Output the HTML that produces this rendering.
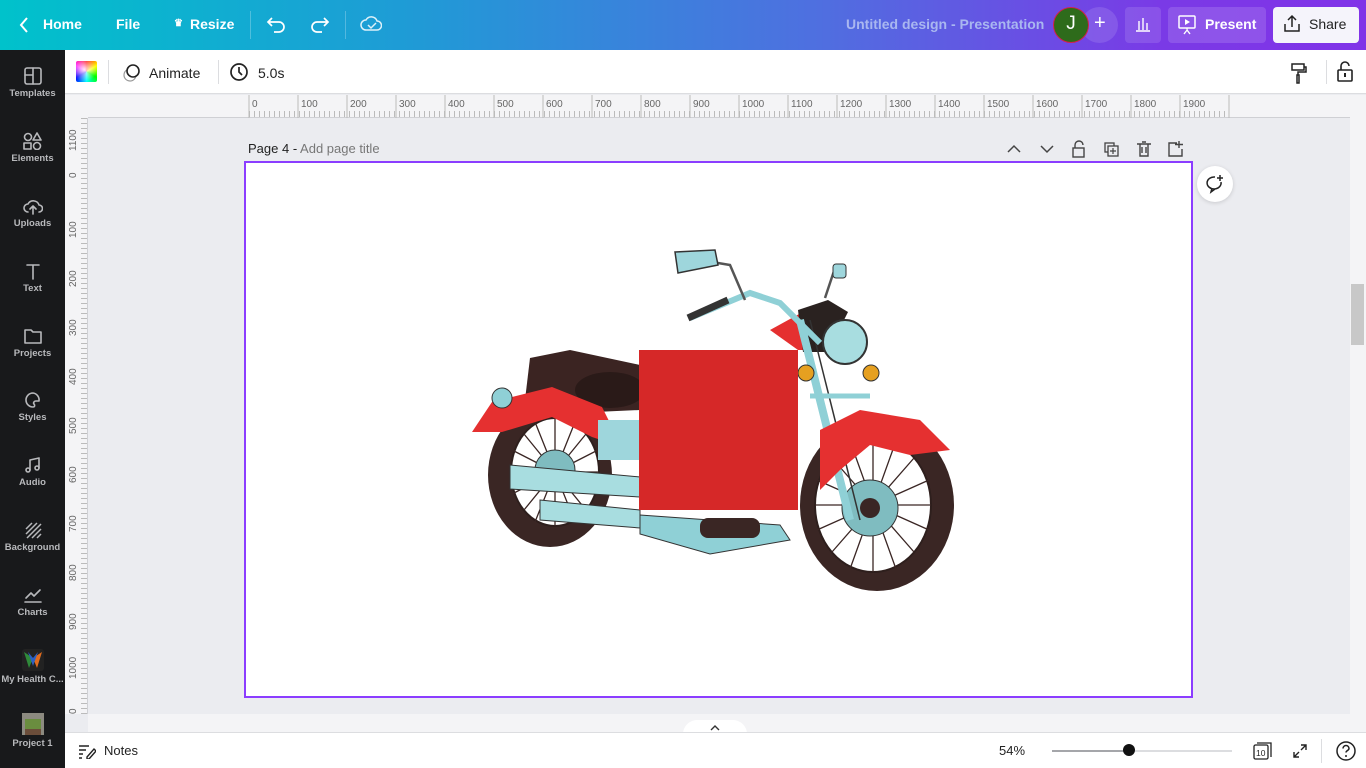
<!DOCTYPE html>
<html><head><meta charset="utf-8"><style>
*{margin:0;padding:0;box-sizing:border-box}
body{width:1366px;height:768px;overflow:hidden;font-family:"Liberation Sans",sans-serif;background:#ebecf0;position:relative}
.a{position:absolute}
.top{left:0;top:0;width:1366px;height:50px;background:linear-gradient(90deg,#00c2cb 0%,#1f9bd6 30%,#4f6fe0 60%,#7a3ae6 85%,#8133e8 100%);color:#fff}
.top .t{position:absolute;top:16px;font-size:14px;font-weight:bold}
.side{left:0;top:50px;width:65px;height:718px;background:#18191b}
.side .it{position:absolute;left:0;width:65px;text-align:center;color:#b8b9bc;font-size:9.5px;font-weight:bold}
.side svg{display:block;margin:0 auto 3px}
.tb{left:65px;top:50px;width:1301px;height:44px;background:#fff;border-bottom:1px solid #dcdde0}
.rt{left:88px;top:95px;width:1262px;height:23px;background:#f4f4f6;border-bottom:1px solid #cfd0d4}
.rl{left:65px;top:118px;width:23px;height:596px;background:#f4f4f6;border-right:1px solid #cfd0d4}
.bot{left:65px;top:732px;width:1301px;height:36px;background:#fff;border-top:1px solid #dcdde0}
.ic{stroke:#222;fill:none;stroke-width:1.6;stroke-linecap:round;stroke-linejoin:round}
</style></head><body>
<div class="a top">
 <svg class="a" style="left:18px;top:16px" width="12" height="18"><path d="M9 2L3 9l6 7" stroke="#fff" stroke-width="2" fill="none"/></svg>
 <span class="t" style="left:43px">Home</span>
 <span class="t" style="left:116px">File</span>
 <span class="t" style="left:174px;font-size:10px;top:18px">♛</span>
 <span class="t" style="left:190px">Resize</span>
 <div class="a" style="left:250px;top:11px;width:1px;height:28px;background:rgba(255,255,255,.25)"></div>
 <svg class="a" style="left:266px;top:14px" width="22" height="20"><path d="M6 4L2 8l4 4M2 8h11a5 5 0 010 10H8" stroke="#fff" stroke-width="1.7" fill="none"/></svg>
 <svg class="a" style="left:308px;top:14px" width="22" height="20"><path d="M16 4l4 4-4 4M20 8H9a5 5 0 000 10h5" stroke="#fff" stroke-width="1.7" fill="none"/></svg>
 <div class="a" style="left:345px;top:11px;width:1px;height:28px;background:rgba(255,255,255,.25)"></div>
 <svg class="a" style="left:360px;top:14px" width="22" height="20"><path d="M6 16a5 5 0 010-10 6 6 0 0111 1 4 4 0 010 9z M8 11l3 3 5-5" stroke="#fff" stroke-width="1.5" fill="none" opacity=".85"/></svg>
 <span class="t" style="left:846px;font-weight:bold;color:#a9b7f0;font-size:14px">Untitled design - Presentation</span>
 <div class="a" style="left:1081px;top:7px;width:37px;height:36px;border-radius:50%;background:rgba(255,255,255,.12)"></div>
 <span class="t" style="left:1094px;top:12px;font-size:20px;font-weight:normal">+</span>
 <div class="a" style="left:1053px;top:7px;width:36px;height:36px;border-radius:50%;background:#2e6b1b;border:1.5px solid #d3204a;color:#fff;font-size:19px;text-align:center;line-height:32px">J</div>
 <div class="a" style="left:1125px;top:7px;width:36px;height:36px;border-radius:4px;background:rgba(255,255,255,.12)"></div>
 <svg class="a" style="left:1134px;top:15px" width="18" height="18"><path d="M2 16h14M5 15V6M9 15V3M13 15V8" stroke="#fff" stroke-width="1.4"/></svg>
 <div class="a" style="left:1168px;top:7px;width:98px;height:36px;border-radius:4px;background:rgba(255,255,255,.14)"></div>
 <svg class="a" style="left:1177px;top:14px" width="20" height="22"><rect x="2" y="2" width="16" height="12" rx="1" stroke="#fff" stroke-width="1.5" fill="none"/><path d="M8 5l5 3-5 3z" fill="#fff"/><path d="M10 14v2l-3 4M10 16l3 4" stroke="#fff" stroke-width="1.4"/></svg>
 <span class="t" style="left:1205px">Present</span>
 <div class="a" style="left:1273px;top:7px;width:86px;height:36px;border-radius:4px;background:#f5f4fb"></div>
 <svg class="a" style="left:1282px;top:14px" width="20" height="20"><path d="M3 10v7h14v-7M10 13V2M6 6l4-4 4 4" stroke="#222" stroke-width="1.5" fill="none"/></svg>
 <span class="t" style="left:1309px;color:#222;font-weight:normal">Share</span>
</div>

<div class="a side">
 <div class="it" style="top:17px"><svg width="18" height="18"><rect x="1" y="1" width="16" height="16" rx="2" class="ic" style="stroke:#b8b9bc"/><path d="M9 1v16M1 8h8" class="ic" style="stroke:#b8b9bc"/></svg>Templates</div>
 <div class="it" style="top:82px"><svg width="20" height="18"><circle cx="5" cy="5" r="3.5" class="ic" style="stroke:#b8b9bc"/><path d="M14 1l4 7h-8z" class="ic" style="stroke:#b8b9bc"/><rect x="1" y="11" width="7" height="6" class="ic" style="stroke:#b8b9bc"/><circle cx="14" cy="14" r="3.5" class="ic" style="stroke:#b8b9bc"/></svg>Elements</div>
 <div class="it" style="top:147px"><svg width="20" height="18"><path d="M5 15a4 4 0 010-8 6 6 0 0111 1 3.5 3.5 0 010 7M10 17V9M7 12l3-3 3 3" class="ic" style="stroke:#b8b9bc"/></svg>Uploads</div>
 <div class="it" style="top:212px"><svg width="18" height="18"><path d="M3 3h12M9 3v14" class="ic" style="stroke:#b8b9bc"/></svg>Text</div>
 <div class="it" style="top:277px"><svg width="20" height="18"><path d="M2 3h6l2 2h8v11H2z" class="ic" style="stroke:#b8b9bc"/></svg>Projects</div>
 <div class="it" style="top:341px"><svg width="18" height="18"><path d="M9 2a7 7 0 000 14c2 0 2-2 1-3s0-3 2-3h3a7 7 0 00-6-8z" class="ic" style="stroke:#b8b9bc"/></svg>Styles</div>
 <div class="it" style="top:406px"><svg width="18" height="18"><path d="M6 14V4l9-2v10" class="ic" style="stroke:#b8b9bc"/><circle cx="4" cy="14" r="2" class="ic" style="stroke:#b8b9bc"/><circle cx="13" cy="12" r="2" class="ic" style="stroke:#b8b9bc"/></svg>Audio</div>
 <div class="it" style="top:471px"><svg width="18" height="18"><path d="M2 8l6-6M2 13L13 2M3 17L17 3M8 17l9-9M13 17l4-4" stroke="#b8b9bc" stroke-width="1.5"/></svg>Background</div>
 <div class="it" style="top:536px"><svg width="20" height="18"><path d="M3 12l5-5 3 3 6-6M2 16h16" class="ic" style="stroke:#b8b9bc"/></svg>Charts</div>
 <div class="it" style="top:599px"><svg width="22" height="22"><rect width="22" height="22" rx="3" fill="#222"/><path d="M2 3l5 16 4-10z" fill="#2f8a3a"/><path d="M20 3l-5 16-4-10z" fill="#e06b1e"/><path d="M6 3l5 14 5-14-5 6z" fill="#2b5fc4"/></svg>My Health C...</div>
 <div class="it" style="top:663px"><svg width="22" height="22"><rect width="22" height="22" fill="#8c8a80"/><rect x="3" y="6" width="16" height="10" fill="#6a8d3f"/><rect x="3" y="16" width="16" height="6" fill="#6b4d3a"/></svg>Project 1</div>
</div>

<div class="a tb">
 <div class="a" style="left:11px;top:11px;width:21px;height:21px;border-radius:2px;background:conic-gradient(red,yellow,lime,cyan,blue,magenta,red)"><div style="width:100%;height:100%;background:radial-gradient(circle at 40% 40%,rgba(255,255,255,.9),rgba(255,255,255,0) 70%)"></div></div>
 <div class="a" style="left:43px;top:10px;width:1px;height:24px;background:#dcdde0"></div>
 <svg class="a" style="left:56px;top:12px" width="22" height="22"><circle cx="9" cy="13" r="6" stroke="#999" stroke-width="1.2" fill="none"/><circle cx="12" cy="9" r="6" stroke="#222" stroke-width="1.6" fill="#fff"/></svg>
 <span class="a" style="left:84px;top:15px;font-size:14px;color:#222">Animate</span>
 <div class="a" style="left:153px;top:10px;width:1px;height:24px;background:#dcdde0"></div>
 <svg class="a" style="left:164px;top:12px" width="20" height="20"><circle cx="10" cy="10" r="8" stroke="#222" stroke-width="1.7" fill="none"/><path d="M10 5v5l3 3" stroke="#222" stroke-width="1.7" fill="none"/></svg>
 <span class="a" style="left:193px;top:15px;font-size:14px;color:#222">5.0s</span>
 <svg class="a" style="left:1224px;top:11px" width="20" height="24"><path d="M3 3h12v6H3zM15 6h2v5H9v3M8 14h2v8H8z" stroke="#222" stroke-width="1.5" fill="none"/></svg>
 <div class="a" style="left:1261px;top:10px;width:1px;height:24px;background:#dcdde0"></div>
 <svg class="a" style="left:1271px;top:10px" width="18" height="24"><path d="M5 10V6a4 4 0 018 0" stroke="#222" stroke-width="1.6" fill="none"/><rect x="2" y="10" width="14" height="11" rx="1" stroke="#222" stroke-width="1.6" fill="none"/><path d="M9 13v4" stroke="#222" stroke-width="2"/></svg>
</div>

<div class="a" style="left:65px;top:95px;width:23px;height:23px;background:#f4f4f6"></div>
<div class="a rt">
 <svg width="1262" height="23" style="position:absolute;left:0;top:0">
  <g font-size="10" fill="#666" font-family="Liberation Sans">
   <text x="164" y="12">0</text><text x="213" y="12">100</text><text x="262" y="12">200</text><text x="311" y="12">300</text><text x="360" y="12">400</text><text x="409" y="12">500</text><text x="458" y="12">600</text><text x="507" y="12">700</text><text x="556" y="12">800</text><text x="605" y="12">900</text><text x="654" y="12">1000</text><text x="703" y="12">1100</text><text x="752" y="12">1200</text><text x="801" y="12">1300</text><text x="850" y="12">1400</text><text x="899" y="12">1500</text><text x="948" y="12">1600</text><text x="997" y="12">1700</text><text x="1046" y="12">1800</text><text x="1095" y="12">1900</text>
  </g>
  <path stroke="#bbb" d="M161 23v-23M210 23v-23M259 23v-23M308 23v-23M357 23v-23M406 23v-23M455 23v-23M504 23v-23M553 23v-23M602 23v-23M651 23v-23M700 23v-23M749 23v-23M798 23v-23M847 23v-23M896 23v-23M945 23v-23M994 23v-23M1043 23v-23M1092 23v-23M1141 23v-23"/>
  <line x1="161" y1="19" x2="1141" y2="19" stroke="#bbb" stroke-dasharray="1 4" stroke-width="6"/>
 </svg>
</div>
<div class="a rl">
 <svg width="23" height="596" style="position:absolute;left:0;top:0">
  <g font-size="10" fill="#666" font-family="Liberation Sans">
   <text transform="translate(11,33) rotate(-90)">1100</text><text transform="translate(11,60) rotate(-90)">0</text><text transform="translate(11,120) rotate(-90)">100</text><text transform="translate(11,169) rotate(-90)">200</text><text transform="translate(11,218) rotate(-90)">300</text><text transform="translate(11,267) rotate(-90)">400</text><text transform="translate(11,316) rotate(-90)">500</text><text transform="translate(11,365) rotate(-90)">600</text><text transform="translate(11,414) rotate(-90)">700</text><text transform="translate(11,463) rotate(-90)">800</text><text transform="translate(11,512) rotate(-90)">900</text><text transform="translate(11,561) rotate(-90)">1000</text><text transform="translate(11,596) rotate(-90)">0</text>
  </g>
  <line x1="19" y1="0" x2="19" y2="596" stroke="#bbb" stroke-dasharray="1 4" stroke-width="6"/>
 </svg>
</div>
<div class="a" style="left:88px;top:714px;width:1262px;height:18px;background:#f4f4f6"></div>
<div class="a" style="left:1350px;top:95px;width:16px;height:637px;background:#f4f4f6"></div>
<div class="a" style="left:1351px;top:284px;width:13px;height:61px;background:#c8c8c8"></div>

<div class="a" style="left:248px;top:141px;font-size:13px;color:#222">Page 4 - <span style="color:#777">Add page title</span></div>
<svg class="a" style="left:1005px;top:140px" width="180" height="18">
 <path d="M3 12l6-6 6 6M36 6l6 6 6-6" stroke="#444" stroke-width="1.5" fill="none"/>
 <path d="M70 8V5a4 4 0 018 0" stroke="#444" stroke-width="1.4" fill="none"/><rect x="68" y="8" width="11" height="9" stroke="#444" stroke-width="1.4" fill="none"/>
 <rect x="100" y="3" width="9" height="9" stroke="#444" stroke-width="1.3" fill="none"/><rect x="103" y="6" width="10" height="10" stroke="#444" stroke-width="1.3" fill="#ebecf0"/><path d="M108 8v6M105 11h6" stroke="#444" stroke-width="1.2"/>
 <path d="M132 4h14M135 4v12h8V4M137 7v6M141 7v6M137 2h4" stroke="#444" stroke-width="1.4" fill="none"/>
 <path d="M172 3h-8v13h13V9M174 1v7M170 4.5h8" stroke="#444" stroke-width="1.4" fill="none"/>
</svg>
<div class="a" style="left:244px;top:161px;width:949px;height:537px;background:#fff;border:2px solid #8b3dff"></div>
<div class="a" style="left:1197px;top:166px;width:36px;height:36px;border-radius:50%;background:#fff;box-shadow:0 1px 4px rgba(0,0,0,.15)"></div>
<svg class="a" style="left:1204px;top:173px" width="22" height="22"><path d="M17 9a7 6 0 11-6-5M8 15l-1 4 4-3" stroke="#222" stroke-width="1.5" fill="none"/><path d="M16 2v6M13 5h6" stroke="#222" stroke-width="1.5"/></svg>

<svg class="a" style="left:0;top:0" width="1366" height="768">
 <!-- rear wheel -->
 <ellipse cx="550" cy="475" rx="62" ry="72" fill="#3a2624"/>
 <ellipse cx="555" cy="472" rx="44" ry="54" fill="#fff" stroke="#2e1f1d" stroke-width="2"/>
 <g stroke="#3a2624" stroke-width="1.3">
  <path d="M555 418v108M511 472h88M524 434l62 76M586 434l-62 76M535 422l40 100M575 422l-40 100M512 450l86 44M512 494l86-44"/>
 </g>
 <circle cx="555" cy="470" r="20" fill="#7fbcc0" stroke="#333"/>
 <!-- front wheel -->
 <ellipse cx="877" cy="505" rx="77" ry="86" fill="#3a2624"/>
 <ellipse cx="873" cy="505" rx="58" ry="67" fill="#fff" stroke="#2e1f1d" stroke-width="2"/>
 <g stroke="#3a2624" stroke-width="1.3">
  <path d="M873 438v134M815 505h116M832 458l82 94M914 458l-82 94M850 441l46 128M896 441l-46 128M817 480l112 50M817 530l112-50"/>
 </g>
 <circle cx="870" cy="508" r="28" fill="#7fbcc0" stroke="#333"/><circle cx="870" cy="508" r="10" fill="#3a2624"/>
 <!-- seat -->
 <path d="M525 400l5-42 40-8 70 15v45l-110 5z" fill="#3b2422"/>
 <ellipse cx="610" cy="390" rx="35" ry="18" fill="#2a1a18"/>
 <!-- rear fender -->
 <path d="M472 432l20-30 60-15 50 20 20 40-30-10-40-20-50 15z" fill="#e53030"/>
 <circle cx="502" cy="398" r="10" fill="#8fd0d6" stroke="#333"/>
 <!-- engine -->
 <path d="M598 420h42v40h-42z" fill="#9ed6dc"/>
 <path d="M510 465l130 12v20l-130-8z" fill="#a8dde0" stroke="#333"/>
 <path d="M540 500l100 10v18l-100-8z" fill="#a8dde0" stroke="#333"/>
 <path d="M640 515l140 10 10 15-80 14-70-20z" fill="#8fd0d6" stroke="#333"/>
 <rect x="700" y="518" width="60" height="20" rx="8" fill="#3a2624"/>
 <!-- tank -->
 <path d="M770 330l40-22 10 42h-22z" fill="#e53030"/>
 <path d="M798 310l30-10 20 12-20 40h-25z" fill="#2a2220"/>
 <!-- fork -->
 <path d="M800 320l50 200" stroke="#8fd0d6" stroke-width="8"/>
 <path d="M810 320l50 200" stroke="#333" stroke-width="1.5"/>
 <!-- headlight -->
 <circle cx="845" cy="342" r="22" fill="#a8dde0" stroke="#333" stroke-width="2"/>
 <circle cx="806" cy="373" r="8" fill="#e6a020" stroke="#333"/>
 <circle cx="871" cy="373" r="8" fill="#e6a020" stroke="#333"/>
 <path d="M810 396h60" stroke="#8fd0d6" stroke-width="5"/>
 <!-- handlebar -->
 <path d="M690 318l60-25 30 10 40 40" stroke="#8fd0d6" stroke-width="6" fill="none"/>
 <path d="M688 318l40-18" stroke="#333" stroke-width="7"/>
 <path d="M700 260l30 5 15 35M835 268l-10 30" stroke="#555" stroke-width="2.5" fill="none"/>
 <path d="M675 252l40-2 3 15-40 8z" fill="#9ed6dc" stroke="#333" stroke-width="1.5"/>
 <rect x="833" y="264" width="13" height="14" rx="3" fill="#9ed6dc" stroke="#333"/>
 <!-- front fender -->
 <path d="M820 430l40-20 60 10 30 30-40 5-40-10-30 25-20 20z" fill="#e53030"/>
 <!-- red square -->
 <rect x="639" y="350" width="159" height="160" fill="#d62828"/>
</svg>

<div class="a" style="left:683px;top:720px;width:64px;height:14px;border-radius:14px 14px 0 0;background:#fff"></div>
<svg class="a" style="left:710px;top:724px" width="10" height="7"><path d="M1 6l4-4 4 4" stroke="#333" stroke-width="1.4" fill="none"/></svg>
<div class="a bot">
 <svg class="a" style="left:13px;top:10px" width="18" height="16"><path d="M1 3h10M1 7h7M1 11h4M1 15h3M9 14l7-8 2 2-7 8h-2z" stroke="#222" stroke-width="1.4" fill="none"/></svg>
 <span class="a" style="left:39px;top:10px;font-size:13px;color:#222">Notes</span>
 <span class="a" style="left:934px;top:10px;font-size:13px;color:#222">54%</span>
 <div class="a" style="left:987px;top:17px;width:77px;height:2px;background:#a5a6aa"></div>
 <div class="a" style="left:1064px;top:17px;width:103px;height:2px;background:#dcdde0"></div>
 <div class="a" style="left:1058px;top:11px;width:12px;height:12px;border-radius:50%;background:#111"></div>
 <svg class="a" style="left:1188px;top:8px" width="20" height="20"><path d="M4 2h14v14" stroke="#222" stroke-width="1.3" fill="none"/><rect x="1" y="4" width="14" height="14" rx="1.5" stroke="#222" stroke-width="1.3" fill="#fff"/><text x="3" y="15" font-size="8.5" font-family="Liberation Sans" fill="#222">10</text></svg>
 <svg class="a" style="left:1226px;top:9px" width="18" height="18"><path d="M10 3h5v5M15 3l-5 5M8 15H3v-5M3 15l5-5" stroke="#222" stroke-width="1.4" fill="none"/></svg>
 <div class="a" style="left:1256px;top:6px;width:1px;height:24px;background:#dcdde0"></div>
 <svg class="a" style="left:1270px;top:7px" width="22" height="22"><circle cx="11" cy="11" r="9" stroke="#222" stroke-width="1.5" fill="none"/><path d="M8 8.5a3 3 0 116 0c0 2-3 2-3 4" stroke="#222" stroke-width="1.5" fill="none"/><circle cx="11" cy="16" r="1" fill="#222"/></svg>
</div>
</body></html>
